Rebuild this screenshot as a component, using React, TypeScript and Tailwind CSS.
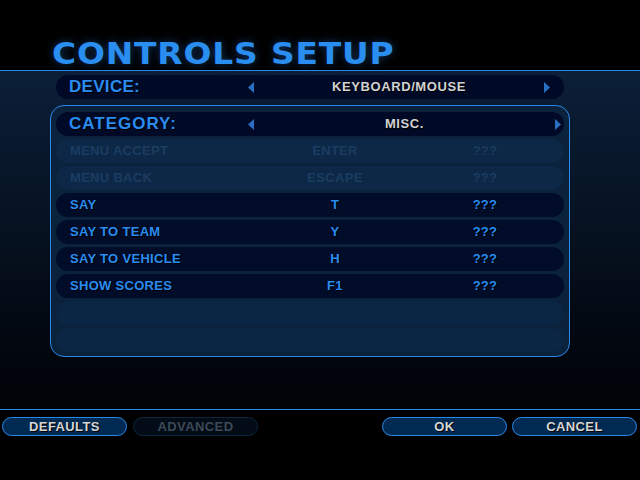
import React from 'react';

const rows = [
  { label: 'MENU ACCEPT', key: 'ENTER', alt: '???', off: true },
  { label: 'MENU BACK', key: 'ESCAPE', alt: '???', off: true },
  { label: 'SAY', key: 'T', alt: '???' },
  { label: 'SAY TO TEAM', key: 'Y', alt: '???' },
  { label: 'SAY TO VEHICLE', key: 'H', alt: '???' },
  { label: 'SHOW SCORES', key: 'F1', alt: '???' },
];

function Arrow({ dir }: { dir: 'left' | 'right' }) {
  return (
    <svg width="6" height="11" viewBox="0 0 6 11" className="shrink-0">
      {dir === 'left' ? (
        <polygon points="6,0 6,11 0,5.5" fill="#2a6fc4" />
      ) : (
        <polygon points="0,0 0,11 6,5.5" fill="#2a6fc4" />
      )}
    </svg>
  );
}

function Button({ label, disabled }: { label: string; disabled?: boolean }) {
  return (
    <div
      className={
        disabled
          ? 'w-[125px] h-[19px] rounded-full border border-[#0d2740] bg-[#020b16] flex items-center justify-center text-[13px] font-bold tracking-[0.4px] text-[#3c4a58]'
          : 'w-[125px] h-[19px] rounded-full border border-[#2a88ec] bg-[#012a52] flex items-center justify-center text-[13px] font-bold tracking-[0.4px] text-[#d6d6d6] [text-shadow:1px_1px_0_#000]'
      }
    >
      {label}
    </div>
  );
}

export default function App() {
  return (
    <div className="w-[640px] h-[480px] bg-black flex flex-col overflow-hidden font-['Liberation_Sans',Arial,sans-serif]">
      {/* Title */}
      <div className="h-[70px] flex items-end pl-[52px] pb-[1px]">
        <h1 className="text-[31px] leading-none font-['DejaVu_Sans',sans-serif] font-bold tracking-[0.8px] text-[#2a8ef0] [text-shadow:0_0_8px_rgba(40,120,220,0.45)] scale-x-[1.06] origin-left">
          CONTROLS SETUP
        </h1>
      </div>
      <div className="h-px bg-[#2a88ec]" />

      {/* Main area */}
      <div className="h-[338px] bg-gradient-to-b from-[#0b1f38] via-[#06111f] to-[#010307] flex flex-col">
        <div className="mt-[4px] ml-[56px] w-[508px] h-[24px] rounded-[12px] bg-[#000a26] flex items-center pl-[13px] pr-[14px]">
          <span className="w-[179px] text-[17px] font-bold tracking-[0.3px] text-[#2a8cf0] [text-shadow:1px_1px_0_#000]">
            DEVICE:
          </span>
          <Arrow dir="left" />
          <span className="flex-1 text-center text-[13px] font-bold tracking-[0.6px] text-[#d2d2d2] [text-shadow:1px_1px_0_#000]">
            KEYBOARD/MOUSE
          </span>
          <Arrow dir="right" />
        </div>

        <div className="mt-[6px] ml-[50px] w-[520px] h-[252px] rounded-[14px] border border-[#2a88ec] bg-[#0a223c] pt-[6px] px-[5px] flex flex-col gap-[3px]">
          <div className="h-[24px] rounded-[12px] bg-[#000a26] flex items-center pl-[13px] pr-[3px]">
            <span className="w-[179px] text-[17px] font-bold tracking-[1px] text-[#2a8cf0] [text-shadow:1px_1px_0_#000]">
              CATEGORY:
            </span>
            <Arrow dir="left" />
            <span className="flex-1 text-center text-[13px] font-bold tracking-[0.6px] text-[#d2d2d2] [text-shadow:1px_1px_0_#000]">
              MISC.
            </span>
            <Arrow dir="right" />
          </div>

          {rows.map((r) => (
            <div
              key={r.label}
              className={
                r.off
                  ? 'h-[24px] rounded-[12px] bg-[#0c2846] flex items-center pl-[14px] text-[13px] font-bold tracking-[0.3px] text-[#1b3c62]'
                  : 'h-[24px] rounded-[12px] bg-[#000c28] flex items-center pl-[14px] text-[13px] font-bold tracking-[0.3px] text-[#2a8cf0] [text-shadow:1px_1px_0_#000]'
              }
            >
              <span className="w-[200px]">{r.label}</span>
              <span className="w-[130px] text-center">{r.key}</span>
              <span className="w-[20px]" />
              <span className="w-[130px] text-center">{r.alt}</span>
            </div>
          ))}

          <div className="h-[24px] rounded-[12px] bg-[#0b2644]" />
          <div className="h-[24px] rounded-[12px] bg-[#0b2644]" />
        </div>
      </div>

      <div className="h-px bg-[#2a88ec]" />

      {/* Footer buttons */}
      <div className="mt-[7px] pl-[2px] pr-[3px] flex">
        <div className="flex gap-[6px]">
          <Button label="DEFAULTS" />
          <Button label="ADVANCED" disabled />
        </div>
        <div className="flex-1" />
        <div className="flex gap-[5px]">
          <Button label="OK" />
          <Button label="CANCEL" />
        </div>
      </div>
    </div>
  );
}
